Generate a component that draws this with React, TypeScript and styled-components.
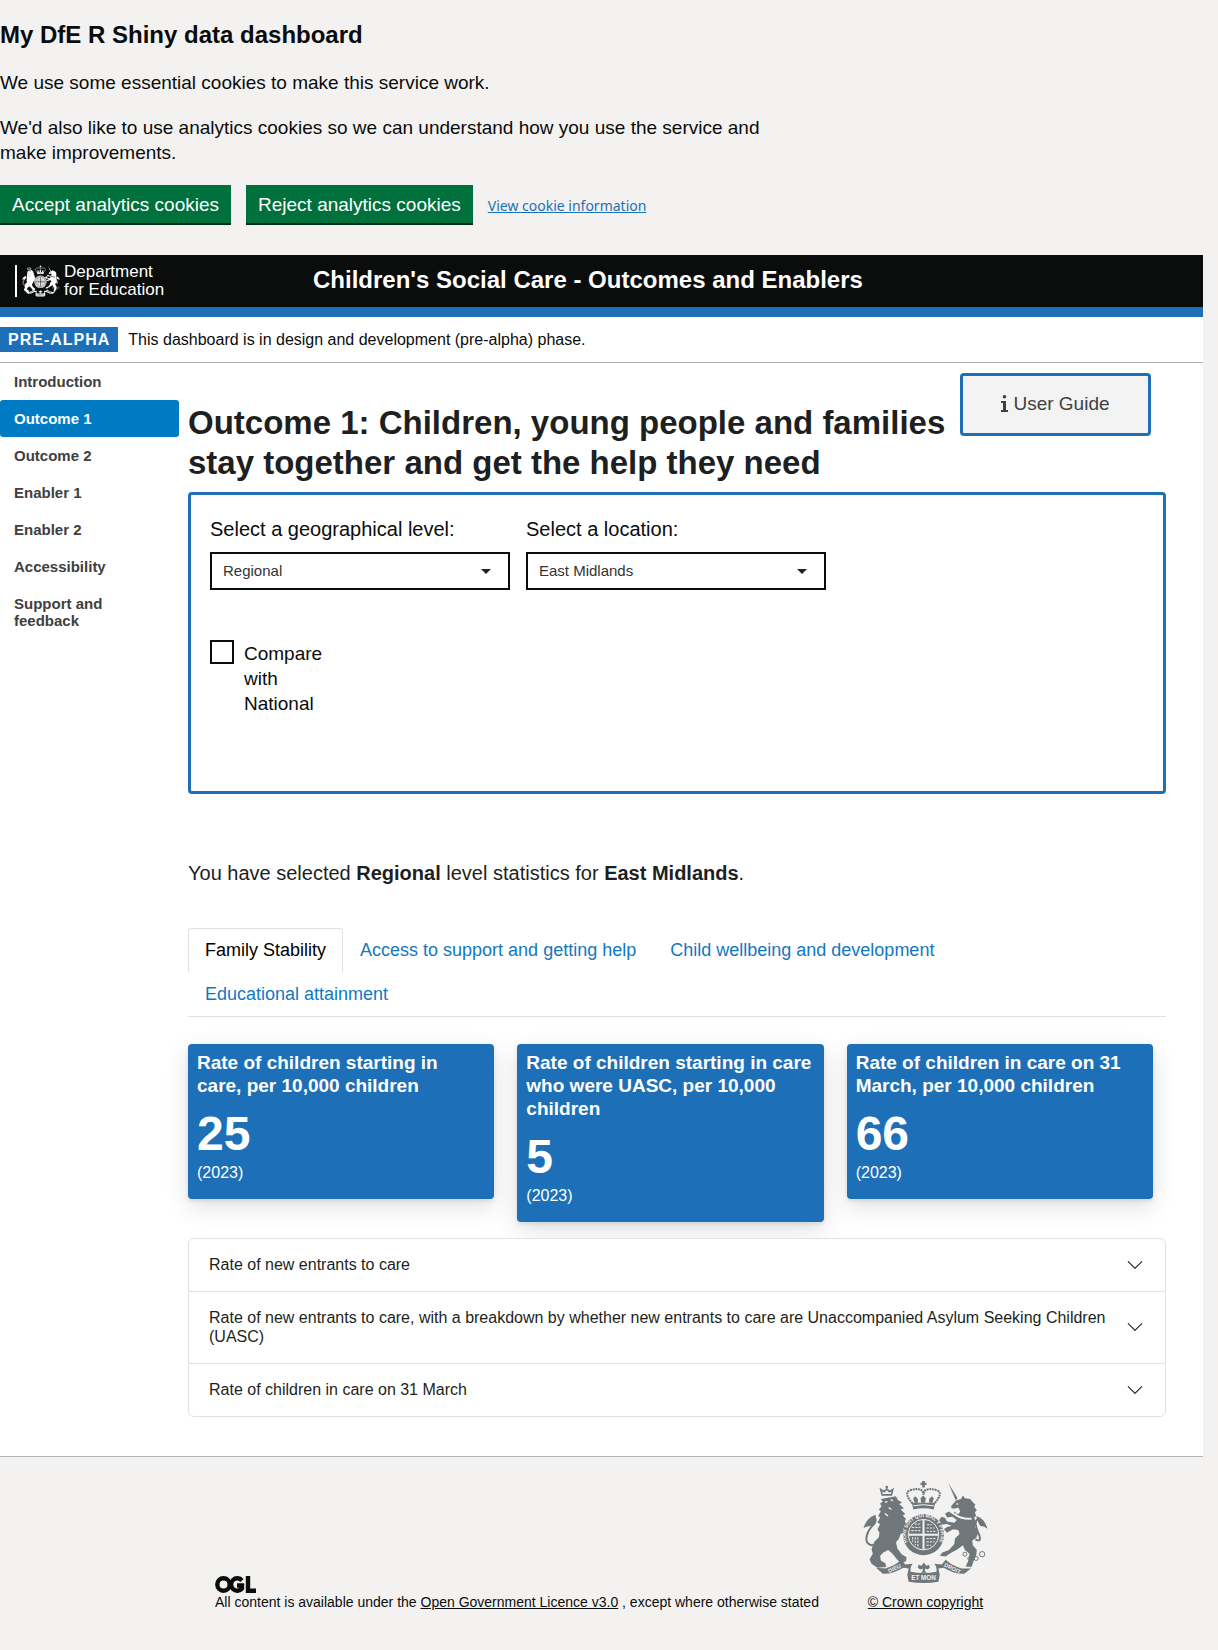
import React, { useState } from 'react';
import styled, { createGlobalStyle } from 'styled-components';

const sans = '"Liberation Sans", Arial, Helvetica, sans-serif';
const brand = '#1d70b8';
const rule = '#b1b4b6';
const hairline = '#dee2e6';
const ink = '#0b0c0c';

const GlobalStyle = createGlobalStyle`
  *, *::before, *::after { box-sizing: border-box; }
  body { margin: 0; background: #f3f2f1; color: #1d1f21; font-family: ${sans}; }
  h1, h2, h3, p, ul { margin: 0; padding: 0; }
  button, select, input { font: inherit; }
`;

const Page = styled.div`
  padding-right: 15px;
`;

const CookieBanner = styled.section`
  display: flex;
  flex-direction: column;
  gap: 20px;
  padding: 20px 0 30px;
  color: ${ink};
  font-size: 19px;
  line-height: 25px;
`;

const CookieTitle = styled.h2`
  font-size: 24px;
  line-height: 30px;
`;

const CookieText = styled.p`
  max-width: 800px;
`;

const CookieActions = styled.div`
  display: flex;
  align-items: center;
  gap: 15px;
`;

const GreenButton = styled.button`
  height: 40px;
  padding: 0 12px;
  border: 0;
  border-bottom: 2px solid #002d18;
  background: #00703c;
  color: #fff;
  font-size: 19px;
`;

const CookieLink = styled.a`
  color: ${brand};
  font-family: "Noto Sans", sans-serif;
  font-size: 14px;
`;

const Header = styled.header`
  display: grid;
  grid-template-columns: 298px 1fr;
  align-items: start;
  height: 62px;
  padding: 8px 15px;
  border-bottom: 10px solid ${brand};
  background: ${ink};
  color: #fff;
`;

const LogoLink = styled.a`
  display: flex;
  align-items: center;
  gap: 4px;
  color: #fff;
  text-decoration: none;
`;

const LogoBar = styled.span`
  width: 2px;
  height: 32px;
  margin-right: 1px;
  background: #fff;
`;

const LogoText = styled.span`
  font-size: 17px;
  line-height: 18px;
`;

const ServiceName = styled.span`
  font-size: 24px;
  font-weight: 700;
  line-height: 34px;
`;

const PhaseBanner = styled.div`
  display: flex;
  align-items: center;
  gap: 10px;
  height: 46px;
  border-bottom: 1px solid ${rule};
  background: #fff;
  color: ${ink};
  font-size: 16px;
`;

const PhaseTag = styled.strong`
  padding: 0 8px;
  background: ${brand};
  color: #fff;
  line-height: 25px;
  letter-spacing: 1px;
`;

const Body = styled.div`
  display: grid;
  grid-template-columns: 179px minmax(0, 1fr);
  align-items: start;
  gap: 9px;
  padding-bottom: 39px;
  border-bottom: 1px solid ${rule};
  background: #fff;
`;

const SideNav = styled.nav`
  display: flex;
  flex-direction: column;
`;

const SideLink = styled.a<{ $active?: boolean }>`
  padding: 10px 40px 10px 14px;
  border-radius: 3px;
  background: ${(p) => (p.$active ? '#007ac3' : 'transparent')};
  color: ${(p) => (p.$active ? '#fff' : '#404040')};
  font-size: 15px;
  font-weight: 700;
  line-height: 17px;
  text-decoration: none;
`;

const Main = styled.main`
  padding: 10px 37px 0 0;
`;

const TitleRow = styled.div`
  display: flex;
  align-items: flex-start;
  margin-right: 15px;
`;

const Title = styled.h1`
  flex: 1;
  padding: 30px 0 9px;
  font-size: 33px;
  line-height: 40px;
`;

const GuideButton = styled.button`
  display: flex;
  align-items: center;
  justify-content: center;
  gap: 5px;
  width: 191px;
  height: 63px;
  padding-bottom: 3px;
  border: 3px solid ${brand};
  border-radius: 4px;
  background: #f3f3f3;
  color: #404040;
  font-size: 19px;
`;

const FilterPanel = styled.section`
  min-height: 302px;
  padding: 22px 19px;
  border: 3px solid ${brand};
  border-radius: 4px;
  color: ${ink};
`;

const FilterRow = styled.div`
  display: flex;
  gap: 16px;
`;

const Field = styled.div`
  display: flex;
  flex-direction: column;
  gap: 10px;
  width: 300px;
`;

const FieldLabel = styled.label`
  font-size: 20px;
  line-height: 25px;
`;

const SelectWrap = styled.div`
  display: grid;
  align-items: center;

  > * { grid-area: 1 / 1; }

  svg {
    justify-self: end;
    margin-right: 19px;
    pointer-events: none;
  }
`;

const Select = styled.select`
  width: 100%;
  height: 38px;
  padding: 0 12px 1px 11px;
  border: 2px solid ${ink};
  border-radius: 0;
  background: #fff;
  color: #333;
  font-size: 15px;
  appearance: none;
`;

const CheckRow = styled.div`
  display: flex;
  align-items: flex-start;
  gap: 10px;
  width: 120px;
  margin-top: 50px;
`;

const CheckBox = styled.input`
  flex: none;
  width: 24px;
  height: 24px;
  margin: 0;
  border: 2px solid ${ink};
  background: #fff;
  appearance: none;

  &:checked { box-shadow: inset 0 0 0 4px #fff; background: ${ink}; }
`;

const CheckLabel = styled.label`
  padding-top: 1px;
  font-size: 19px;
  line-height: 25px;
`;

const Summary = styled.p`
  margin: 66px 0 41px;
  font-size: 20px;
  line-height: 27px;
`;

const Tabs = styled.div`
  display: flex;
  flex-wrap: wrap;
  border-bottom: 1px solid ${hairline};
`;

const Tab = styled.button<{ $active?: boolean }>`
  height: 44px;
  padding: 0 16px;
  border: 1px solid ${(p) => (p.$active ? hairline : 'transparent')};
  border-bottom: 0;
  border-radius: 4px 4px 0 0;
  background: transparent;
  color: ${(p) => (p.$active ? '#000' : '#1378c0')};
  font-size: 18px;
`;

const Cards = styled.div`
  display: grid;
  grid-template-columns: repeat(3, minmax(0, 1fr));
  align-items: start;
  gap: 23px;
  margin: 27px 13px 16px 0;
`;

const Card = styled.article`
  padding: 7px 9px 14px;
  border-radius: 4px;
  background: ${brand};
  box-shadow: 0 8px 24px rgba(0, 0, 0, 0.12), 0 2px 4px rgba(0, 0, 0, 0.1);
  color: #fff;
`;

const CardTitle = styled.h3`
  font-size: 19px;
  line-height: 23px;
`;

const CardValue = styled.p`
  margin-top: 10px;
  font-size: 48px;
  font-weight: 700;
  line-height: 54px;
`;

const CardPeriod = styled.p`
  font-size: 16px;
  line-height: 24px;
`;

const Accordion = styled.div`
  position: relative;
  border: 1px solid ${hairline};
  border-radius: 6px;
  background: #fff;
`;

const AccordionButton = styled.button`
  display: flex;
  align-items: center;
  justify-content: space-between;
  gap: 20px;
  width: 100%;
  padding: 16px 21px 17px 20px;
  border: 0;
  background: transparent;
  color: #1d1f21;
  font-size: 16px;
  line-height: 19px;
  text-align: left;

  & + & { border-top: 1px solid ${hairline}; }
  svg { flex: none; }
`;

const Footer = styled.footer`
  display: flex;
  align-items: flex-end;
  justify-content: center;
  gap: 44px;
  padding: 24px 0 34px;
  color: ${ink};
  font-size: 14px;
  line-height: 18px;
`;

const Licence = styled.div`
  display: flex;
  flex-direction: column;
`;

const FooterLink = styled.a`
  color: ${ink};
`;

const CrownLink = styled(FooterLink)`
  display: flex;
  flex-direction: column;
  align-items: center;
  gap: 10px;
`;

const Motto = styled.g`
  font-family: ${sans};
  font-weight: 700;
  text-anchor: middle;
`;

type ArmsProps = { width: number; height: number; color: string; paper: string; motto?: boolean };

function RoyalArms({ width, height, color, paper, motto }: ArmsProps) {
  return (
    <svg width={width} height={height} viewBox="9 20 376 308" aria-hidden="true">
      <g fill={color}>
        {/* lion */}
        <circle cx="80" cy="38" r="4" />
        <path d="M62 74L108 66L114 78L126 84L118 90L132 102L122 106L136 120L128 124L138 134L134 144L146 152L152 162L142 168L130 162L134 174L122 180L116 196L108 204L112 224L126 242L140 250L138 262L122 268L112 258L96 238L84 228L70 236L60 246L62 260L76 268L78 280L52 282L34 270L28 256L38 240L34 226L42 204L56 190L58 176L52 166L60 150L52 146L60 130L54 126L62 112L56 106L64 98L60 88L68 82Z" />
        {/* unicorn */}
        <path d="M266 26L294 72L288 78Z" />
        <path d="M274 96L290 78L304 74L310 64L316 72L332 74L340 84L348 92L344 98L352 108L346 114L350 126L344 130L350 146L346 158L356 176L350 192L338 200L340 214L352 228L350 244L342 262L336 280L318 278L326 262L330 240L316 228L310 214L294 226L272 238L258 248L240 246L248 236L268 228L284 210L286 194L300 180L296 168L280 166L262 176L252 166L264 158L276 156L262 150L244 152L238 138L246 128L256 132L262 142L284 146L292 138L278 128L262 130L256 118L268 112L278 120L294 124L302 112L296 100L284 104L276 102Z" />
        {/* crown */}
        <path d="M187 20h8v5h5v7h-5v8h-8v-8h-5v-7h5z" />
        <path d="M156 86L226 86L222 106Q190 98 160 106Z" />
        <path d="M184 86l-2-14 8-8 8 8-2 14zM164 86l-4-14 6-6 8 8 0 12zM218 86l4-14-6-6-8 8 0 12z" />
        {/* garter and scroll */}
        <circle cx="191" cy="182" r="62" />
        <path d="M48 282L76 284Q102 278 124 258L136 272L158 270Q150 280 152 294Q192 302 230 294Q232 280 224 270L246 272L258 258Q280 278 306 284L334 284L314 300Q284 302 252 282L236 284L240 302L236 324Q192 332 146 324L142 302L146 284L130 282Q98 302 68 300Z" />
      </g>
      <g fill="none" stroke={color} strokeWidth="5">
        <path d="M66 62l-4-16 10 6 8-8 8 8 10-6-4 16z" />
        <path d="M158 88Q130 56 150 48Q176 40 188 50Q190 56 191 62Q192 56 194 50Q206 40 232 48Q252 56 224 88" strokeWidth="6" strokeDasharray="6 2" />
        <path d="M46 214Q12 216 20 184Q26 164 42 150Q50 140 44 130" strokeWidth="6" />
        <path d="M348 196Q366 206 360 186Q350 164 348 148Q350 132 364 134" strokeWidth="6" />
        <circle cx="316" cy="241" r="6" strokeWidth="3" />
        <circle cx="331" cy="254" r="6" strokeWidth="3" />
        <circle cx="350" cy="254" r="6" strokeWidth="3" />
        <circle cx="368" cy="241" r="8" strokeWidth="3" />
      </g>
      <g fill={color}>
        <path d="M46 122Q18 132 10 162Q24 154 36 156Q50 144 46 122Z" />
        <path d="M350 126Q376 134 384 164Q372 154 362 156Q354 144 350 126Z" />
        <path d="M192 266l7 10 9-3 2 10-8 4-6-3-1 7 6 6h-18l6-6-1-7-6 3-8-4 2-10 9 3z" />
      </g>
      <g fill="none" stroke={paper}>
        <circle cx="191" cy="182" r="46" strokeWidth="3" />
        <path d="M191 137v90M146 182h90" strokeWidth="6" />
        <path d="M156 160h26M154 170h28M164 150h18M202 152h14M200 162h24M200 172h30M166 190v24M174 190v32M158 190v14M200 194h28M200 204h24M200 214h14" strokeWidth="3" strokeDasharray="7 3" />
        <path d="M160 95Q190 88 222 95" strokeWidth="3" />
        <path d="M92 76l6 4M74 84l8-2M86 100l8 6M74 118l10 8" strokeWidth="4" />
        <path d="M282 118Q304 136 336 134" strokeWidth="6" />
        <path d="M290 90l6-1" strokeWidth="4" />
      </g>
      <path d="M284 114Q304 130 338 128" fill="none" stroke={color} strokeWidth="4" strokeDasharray="5 4" />
      {motto ? (
        <Motto fill={paper} fontSize="17">
          <path id="garter" d="M153 219A53 53 0 1 1 229 219" fill="none" transform="translate(0 0)" />
          <text fontSize="15">
            <textPath href="#garter" startOffset="50%">HONI SOIT QUI MAL Y PENSE</textPath>
          </text>
          <text transform="translate(106 289) rotate(-26)">DIEU</text>
          <text x="191" y="320" fontSize="19">ET MON</text>
          <text transform="translate(276 289) rotate(26)">DROIT</text>
        </Motto>
      ) : (
        <g fill="none" stroke={paper} strokeWidth="8">
          <circle cx="191" cy="182" r="55" strokeDasharray="8 5" strokeWidth="6" />
          <path d="M84 292L124 272M258 272L298 292M154 312h74" strokeDasharray="8 4" />
        </g>
      )}
    </svg>
  );
}

function OglMark() {
  return (
    <svg width="41" height="17" viewBox="0 0 41 17" role="img" aria-label="OGL">
      <g fill="none" stroke={ink} strokeWidth="4.400">
        <circle cx="8.500" cy="8.500" r="6.200" />
        <path d="M27 4.500A6.200 6.200 0 1 0 27 12.500V9.500H22" />
        <path d="M33 0V14.800H41" />
      </g>
    </svg>
  );
}

const Caret = () => (
  <svg width="10" height="5" viewBox="0 0 10 5" aria-hidden="true">
    <path d="M0 0h10L5 5z" fill="#222" />
  </svg>
);

const Chevron = () => (
  <svg width="18" height="18" viewBox="0 0 16 16" fill="#212529" aria-hidden="true">
    <path
      fillRule="evenodd"
      d="M1.646 4.646a.5.5 0 0 1 .708 0L8 10.293l5.646-5.647a.5.5 0 0 1 .708.708l-6 6a.5.5 0 0 1-.708 0l-6-6a.5.5 0 0 1 0-.708z"
    />
  </svg>
);

const InfoIcon = () => (
  <svg width="7" height="17" viewBox="0 0 7 17" fill="currentColor" aria-hidden="true">
    <circle cx="3.500" cy="1.800" r="1.800" />
    <path d="M0 6h5v9h2v2H0v-2h2V8H0z" />
  </svg>
);

const pages = ['Introduction', 'Outcome 1', 'Outcome 2', 'Enabler 1', 'Enabler 2', 'Accessibility', 'Support and feedback'];
const tabs = ['Family Stability', 'Access to support and getting help', 'Child wellbeing and development', 'Educational attainment'];
const stats = [
  { title: 'Rate of children starting in care, per 10,000 children', value: 25 },
  { title: 'Rate of children starting in care who were UASC, per 10,000 children', value: 5 },
  { title: 'Rate of children in care on 31 March, per 10,000 children', value: 66 },
];
const sections = [
  'Rate of new entrants to care',
  'Rate of new entrants to care, with a breakdown by whether new entrants to care are Unaccompanied Asylum Seeking Children (UASC)',
  'Rate of children in care on 31 March',
];

export default function App() {
  const [page, setPage] = useState(pages[1]);
  const [tab, setTab] = useState(tabs[0]);

  return (
    <>
      <GlobalStyle />
      <Page>
        <CookieBanner>
          <CookieTitle>My DfE R Shiny data dashboard</CookieTitle>
          <CookieText>We use some essential cookies to make this service work.</CookieText>
          <CookieText>
            We'd also like to use analytics cookies so we can understand how you use the service and make improvements.
          </CookieText>
          <CookieActions>
            <GreenButton>Accept analytics cookies</GreenButton>
            <GreenButton>Reject analytics cookies</GreenButton>
            <CookieLink href="#cookies">View cookie information</CookieLink>
          </CookieActions>
        </CookieBanner>

        <Header>
          <LogoLink href="#home">
            <LogoBar />
            <RoyalArms width={38} height={32} color="#fff" paper={ink} />
            <LogoText>
              Department
              <br />
              for Education
            </LogoText>
          </LogoLink>
          <ServiceName>Children's Social Care - Outcomes and Enablers</ServiceName>
        </Header>

        <PhaseBanner>
          <PhaseTag>PRE-ALPHA</PhaseTag>
          <span>This dashboard is in design and development (pre-alpha) phase.</span>
        </PhaseBanner>

        <Body>
          <SideNav>
            {pages.map((name) => (
              <SideLink key={name} href="#page" $active={name === page} onClick={() => setPage(name)}>
                {name}
              </SideLink>
            ))}
          </SideNav>

          <Main>
            <TitleRow>
              <Title>Outcome 1: Children, young people and families stay together and get the help they need</Title>
              <GuideButton>
                <InfoIcon />
                User Guide
              </GuideButton>
            </TitleRow>

            <FilterPanel>
              <FilterRow>
                <Field>
                  <FieldLabel htmlFor="level">Select a geographical level:</FieldLabel>
                  <SelectWrap>
                    <Select id="level" defaultValue="Regional">
                      <option>Regional</option>
                    </Select>
                    <Caret />
                  </SelectWrap>
                </Field>
                <Field>
                  <FieldLabel htmlFor="location">Select a location:</FieldLabel>
                  <SelectWrap>
                    <Select id="location" defaultValue="East Midlands">
                      <option>East Midlands</option>
                    </Select>
                    <Caret />
                  </SelectWrap>
                </Field>
              </FilterRow>
              <CheckRow>
                <CheckBox type="checkbox" id="national" />
                <CheckLabel htmlFor="national">Compare with National</CheckLabel>
              </CheckRow>
            </FilterPanel>

            <Summary>
              You have selected <b>Regional</b> level statistics for <b>East Midlands</b>.
            </Summary>

            <Tabs role="tablist">
              {tabs.map((name) => (
                <Tab key={name} role="tab" aria-selected={name === tab} $active={name === tab} onClick={() => setTab(name)}>
                  {name}
                </Tab>
              ))}
            </Tabs>

            <Cards>
              {stats.map((s) => (
                <Card key={s.title}>
                  <CardTitle>{s.title}</CardTitle>
                  <CardValue>{s.value}</CardValue>
                  <CardPeriod>(2023)</CardPeriod>
                </Card>
              ))}
            </Cards>

            <Accordion>
              {sections.map((name) => (
                <AccordionButton key={name} aria-expanded={false}>
                  {name}
                  <Chevron />
                </AccordionButton>
              ))}
            </Accordion>
          </Main>
        </Body>

        <Footer>
          <Licence>
            <OglMark />
            <span>
              All content is available under the <FooterLink href="#ogl">Open Government Licence v3.0</FooterLink> , except
              where otherwise stated
            </span>
          </Licence>
          <CrownLink href="#copyright">
            <RoyalArms width={125} height={102} color="#6f777b" paper="#f3f2f1" motto />
            © Crown copyright
          </CrownLink>
        </Footer>
      </Page>
    </>
  );
}
